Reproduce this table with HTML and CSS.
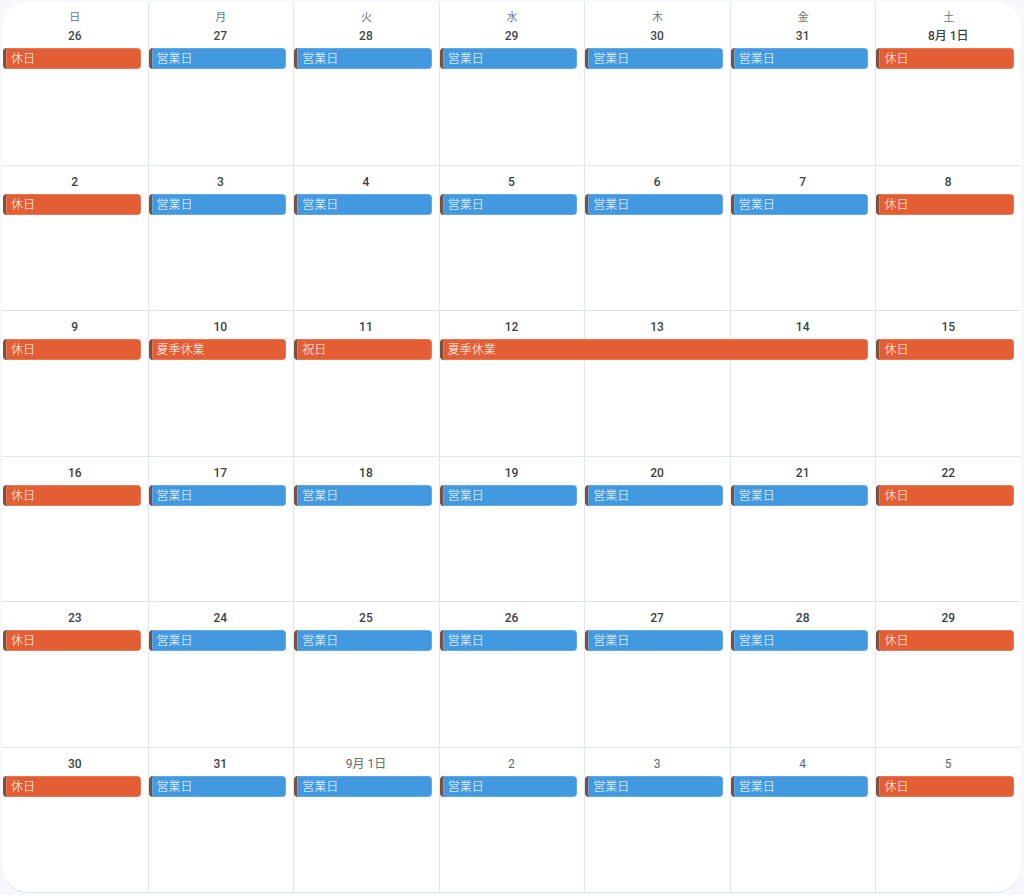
FILE: index.html
```html
<!DOCTYPE html>
<html lang="ja">
<head>
<meta charset="utf-8">
<title>カレンダー</title>
<link rel="stylesheet" href="styles.css">
</head>
<body>
<div class="card">
  <div class="head">
    <div class="wd">日</div><div class="wd">月</div><div class="wd">火</div><div class="wd">水</div><div class="wd">木</div><div class="wd">金</div><div class="wd">土</div>
  </div>

  <div class="week">
    <div class="cell c1"></div><div class="cell c2"></div><div class="cell c3"></div><div class="cell c4"></div><div class="cell c5"></div><div class="cell c6"></div><div class="cell c7"></div>
    <div class="date c1 prev">26</div><div class="date c2 prev">27</div><div class="date c3 prev">28</div><div class="date c4 prev">29</div><div class="date c5 prev">30</div><div class="date c6 prev">31</div><div class="date c7">8月 1日</div>
    <div class="ev off c1">休日</div><div class="ev on c2">営業日</div><div class="ev on c3">営業日</div><div class="ev on c4">営業日</div><div class="ev on c5">営業日</div><div class="ev on c6">営業日</div><div class="ev off c7">休日</div>
  </div>

  <div class="week top">
    <div class="cell c1"></div><div class="cell c2"></div><div class="cell c3"></div><div class="cell c4"></div><div class="cell c5"></div><div class="cell c6"></div><div class="cell c7"></div>
    <div class="date c1">2</div><div class="date c2">3</div><div class="date c3">4</div><div class="date c4">5</div><div class="date c5">6</div><div class="date c6">7</div><div class="date c7">8</div>
    <div class="ev off c1">休日</div><div class="ev on c2">営業日</div><div class="ev on c3">営業日</div><div class="ev on c4">営業日</div><div class="ev on c5">営業日</div><div class="ev on c6">営業日</div><div class="ev off c7">休日</div>
  </div>

  <div class="week top">
    <div class="cell c1"></div><div class="cell c2"></div><div class="cell c3"></div><div class="cell c4"></div><div class="cell c5"></div><div class="cell c6"></div><div class="cell c7"></div>
    <div class="date c1">9</div><div class="date c2">10</div><div class="date c3">11</div><div class="date c4">12</div><div class="date c5">13</div><div class="date c6">14</div><div class="date c7">15</div>
    <div class="ev off c1">休日</div><div class="ev off c2">夏季休業</div><div class="ev off c3">祝日</div><div class="ev off c4 span3">夏季休業</div><div class="ev off c7">休日</div>
  </div>

  <div class="week top">
    <div class="cell c1"></div><div class="cell c2"></div><div class="cell c3"></div><div class="cell c4"></div><div class="cell c5"></div><div class="cell c6"></div><div class="cell c7"></div>
    <div class="date c1">16</div><div class="date c2">17</div><div class="date c3">18</div><div class="date c4">19</div><div class="date c5">20</div><div class="date c6">21</div><div class="date c7">22</div>
    <div class="ev off c1">休日</div><div class="ev on c2">営業日</div><div class="ev on c3">営業日</div><div class="ev on c4">営業日</div><div class="ev on c5">営業日</div><div class="ev on c6">営業日</div><div class="ev off c7">休日</div>
  </div>

  <div class="week top">
    <div class="cell c1"></div><div class="cell c2"></div><div class="cell c3"></div><div class="cell c4"></div><div class="cell c5"></div><div class="cell c6"></div><div class="cell c7"></div>
    <div class="date c1">23</div><div class="date c2">24</div><div class="date c3">25</div><div class="date c4">26</div><div class="date c5">27</div><div class="date c6">28</div><div class="date c7">29</div>
    <div class="ev off c1">休日</div><div class="ev on c2">営業日</div><div class="ev on c3">営業日</div><div class="ev on c4">営業日</div><div class="ev on c5">営業日</div><div class="ev on c6">営業日</div><div class="ev off c7">休日</div>
  </div>

  <div class="week top">
    <div class="cell c1"></div><div class="cell c2"></div><div class="cell c3"></div><div class="cell c4"></div><div class="cell c5"></div><div class="cell c6"></div><div class="cell c7"></div>
    <div class="date c1">30</div><div class="date c2">31</div><div class="date c3 next">9月 1日</div><div class="date c4 next">2</div><div class="date c5 next">3</div><div class="date c6 next">4</div><div class="date c7 next">5</div>
    <div class="ev off c1">休日</div><div class="ev on c2">営業日</div><div class="ev on c3">営業日</div><div class="ev on c4">営業日</div><div class="ev on c5">営業日</div><div class="ev on c6">営業日</div><div class="ev off c7">休日</div>
  </div>
</div>
</body>
</html>
```

FILE: styles.css
```css
html, body {
  margin: 0;
  padding: 0;
  background: #f7f8fc;
}
body {
  font-family: Roboto, "Noto Sans CJK JP", sans-serif;
  width: 1024px;
  height: 895px;
  overflow: hidden;
}
.card {
  margin: 2px 3px 0 2px;
  width: 1019px;
  height: 890px;
  background: #ffffff;
  border-radius: 26px;
  box-shadow: 0 1px 0 #e4e6ee;
  display: flex;
  flex-direction: column;
  overflow: hidden;
}
.head {
  height: 18px;
  flex: 0 0 18px;
  display: grid;
  grid-template-columns: repeat(7, 1fr);
}
.wd {
  box-sizing: border-box;
  padding-top: 11px;
  line-height: 10px;
  height: 18px;
  font-size: 11px;
  color: #70757a;
  text-align: center;
  border-left: 1px solid #e3e5ee;
}
.wd:first-child { border-left: none; }
.week {
  flex: 1 1 0;
  min-height: 0;
  display: grid;
  grid-template-columns: repeat(7, 1fr);
  grid-template-rows: 24px 21px 1fr;
  row-gap: 4px;
}
.week.top { border-top: 1px solid #e3e5ee; }
.cell {
  grid-row: 1 / -1;
  border-left: 1px solid #e3e5ee;
}
.cell.c1 { border-left: none; }
.c1 { grid-column: 1; }
.c2 { grid-column: 2; }
.c3 { grid-column: 3; }
.c4 { grid-column: 4; }
.c5 { grid-column: 5; }
.c6 { grid-column: 6; }
.c7 { grid-column: 7; }
.date {
  grid-row: 1;
  box-sizing: border-box;
  padding-top: 8px;
  line-height: 16px;
  font-size: 12px;
  font-weight: 500;
  color: #3c4043;
  text-align: center;
}
.date.prev { color: #44474b; }
.date.next { color: #63676b; font-weight: 400; }
.ev {
  grid-row: 2;
  box-sizing: border-box;
  height: 21px;
  margin: 0 7px 0 1px;
  padding-left: 5px;
  border-radius: 4px;
  border-left: 3px solid #7a5040;
  box-shadow: inset 0 0 0 0.5px rgba(255,255,255,0.35);
  color: #ffffff;
  font-family: "Noto Sans CJK JP", sans-serif;
  font-size: 12px;
  font-weight: 300;
  line-height: 19px;
  white-space: nowrap;
  overflow: hidden;
}
.ev.span3 { grid-column: 4 / span 3; }
.off { background: #e35e34; }
.on { background: #4399df; }
```
